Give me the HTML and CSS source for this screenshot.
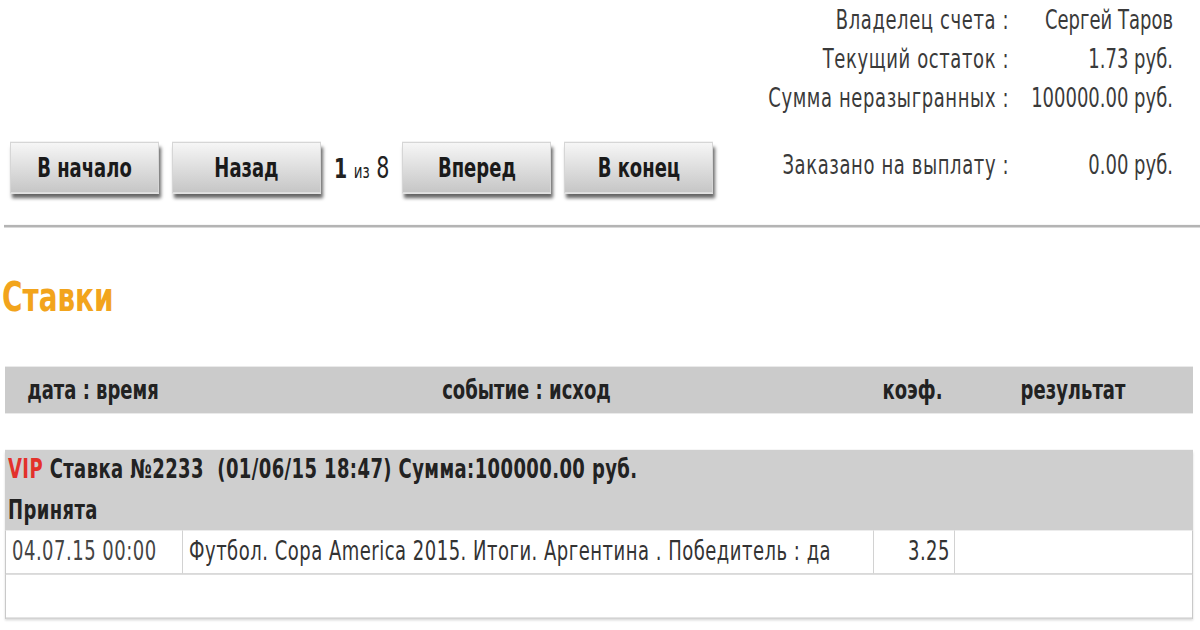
FILE: index.html
```html
<!DOCTYPE html>
<html lang="ru">
<head>
    <meta charset="UTF-8">
    <title>Ставки - личный кабинет</title>
    <link rel="stylesheet" href="styles.css">
</head>
<body>
<div class="page">

    <div class="top">
        <div class="pager">
            <button class="btn">В начало</button>
            <button class="btn">Назад</button>
            <span class="pages"><b>1</b> <small>из</small> 8</span>
            <button class="btn">Вперед</button>
            <button class="btn">В конец</button>
        </div>

        <table class="account">
            <tr><td class="lbl">Владелец счета :</td><td class="val">Сергей Таров</td></tr>
            <tr><td class="lbl">Текущий остаток :</td><td class="val">1.73 руб.</td></tr>
            <tr><td class="lbl">Сумма неразыгранных :</td><td class="val">100000.00 руб.</td></tr>
            <tr class="last"><td class="lbl">Заказано на выплату :</td><td class="val">0.00 руб.</td></tr>
        </table>
    </div>

    <hr class="sep">

    <h2 class="title">Ставки</h2>

    <div class="cols bets-head">
        <div>дата : время</div>
        <div>событие : исход</div>
        <div>коэф.</div>
        <div>результат</div>
    </div>

    <div class="bet">
        <div class="bet-info">
            <span class="vip">VIP</span> Ставка №2233 &nbsp;(01/06/15 18:47) Сумма:100000.00 руб.<br>
            Принята
        </div>
        <div class="cols bet-row">
            <div class="c-date">04.07.15 00:00</div>
            <div class="c-event">Футбол. Copa America 2015. Итоги. Аргентина . Победитель : да</div>
            <div class="c-coef">3.25</div>
            <div class="c-res"></div>
        </div>
        <div class="bet-empty"></div>
    </div>

</div>
</body>
</html>
```

FILE: styles.css
```css
html, body {
    height: 630px;
}
body {
    margin: 0;
    background: #fff;
    font-family: "DejaVu Sans Condensed", "DejaVu Sans", sans-serif;
    font-stretch: condensed;
    font-size: 20px;
    color: #222;
}

/* the original capture is stretched vertically, so the whole sheet is too */
.page {
    width: 1188px;
    margin-left: 5px;
    transform: scaleY(1.3);
    transform-origin: 0 0;
}

.top {
    display: flex;
    justify-content: space-between;
    align-items: flex-end;
}

.pager {
    display: flex;
    align-items: center;
    gap: 13px;
    padding-left: 5px;
}
.btn {
    width: 149px;
    height: 40px;
    font: inherit;
    font-weight: bold;
    color: #1a1a1a;
    background: linear-gradient(#f6f6f6, #c6c6c6);
    border: 1px solid #d6d6d6;
    border-radius: 0;
    box-shadow: 2px 4px 3px rgba(0,0,0,0.6);
    padding: 0;
}
.pages {
    font-size: 23px;
    color: #222;
    white-space: nowrap;
}
.pages b {
    font-size: 21px;
}
.pages small {
    font-size: 15px;
}

.account {
    border-collapse: collapse;
    margin-right: 20px;
    color: #3a3a3a;
}
.account td {
    padding: 0;
    height: 30px;
    line-height: 30px;
    text-align: right;
    white-space: nowrap;
}
.account .lbl {
    letter-spacing: 0.6px;
}
.account .val {
    padding-left: 22px;
}
.account .last td {
    padding-top: 22px;
    padding-bottom: 7px;
}

.sep {
    border: 0;
    border-top: 2px solid #b4b4b4;
    margin: 24px -7px 0 -1px;
}

.title {
    margin: 36px 0 0 -3px;
    font-size: 31px;
    line-height: 34px;
    font-weight: bold;
    color: #f2a41c;
}

.cols {
    display: grid;
    grid-template-columns: 176px 691px 81px 1fr;
}

.bets-head {
    margin-top: 37px;
    height: 36px;
    line-height: 36px;
    background: #cbcbcb;
    font-weight: bold;
    text-align: center;
}

.bet {
    margin-top: 28px;
    box-shadow: 0 2px 2px rgba(0,0,0,0.15);
}
.bet-info {
    background: #cfcfcf;
    padding: 0 3px;
    line-height: 31px;
    font-weight: bold;
    letter-spacing: 0.4px;
}
.vip {
    color: #e3312b;
}

.bet-row {
    height: 33px;
    line-height: 33px;
    border: 1px solid #c9c9c9;
    border-top: 0;
    letter-spacing: 0.5px;
}
.bet-row > div {
    border-left: 1px solid #d2d2d2;
    white-space: nowrap;
    overflow: hidden;
}
.bet-row > div:first-child {
    border-left: 0;
}
.c-date {
    padding-left: 6px;
    color: #444;
}
.c-event {
    padding-left: 6px;
    color: #333;
}
.c-coef {
    text-align: right;
    padding-right: 4px;
    color: #333;
}

.bet-empty {
    height: 33px;
    border: 1px solid #c9c9c9;
    border-top: 0;
}
```
